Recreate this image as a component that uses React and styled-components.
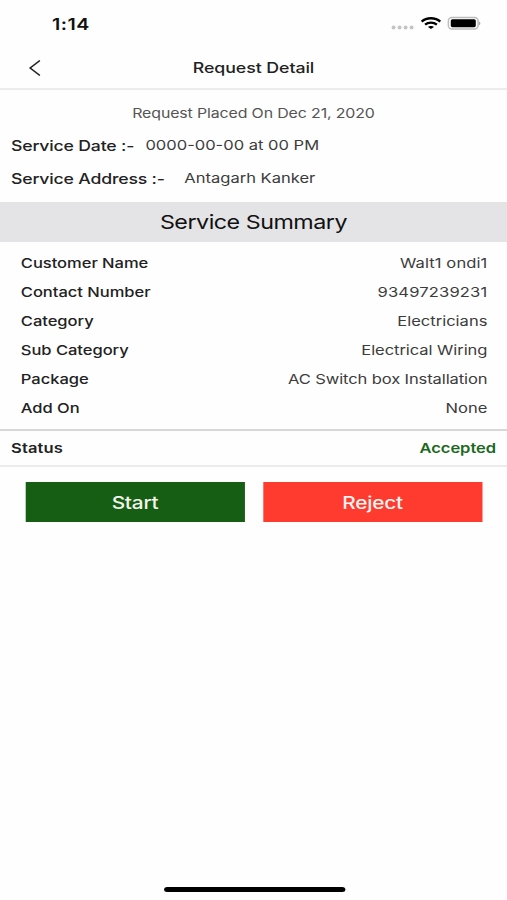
import React from 'react';
import styled, { createGlobalStyle } from 'styled-components';

const details = [
    { label: 'Customer Name', value: 'Walt1 ondi1', spacing: 0.08 },
    { label: 'Contact Number', value: '93497239231', spacing: 0.14 },
    { label: 'Category', value: 'Electricians', spacing: 0 },
    { label: 'Sub Category', value: 'Electrical Wiring', spacing: -0.05 },
    { label: 'Package', value: 'AC Switch box Installation', spacing: -0.09 },
    { label: 'Add On', value: 'None', spacing: 0 },
];

function StatusIcons() {
    return (
        <Icons width="74" height="16" viewBox="0 0 90.6 16" preserveAspectRatio="none">
            <g fill="#c4c4c4">
                <circle cx="2.9" cy="11.4" r="2" />
                <circle cx="8.9" cy="11.4" r="2" />
                <circle cx="14.9" cy="11.4" r="2" />
                <circle cx="20.9" cy="11.4" r="2" />
            </g>
            <g fill="none" stroke="#000" strokeWidth="2.3">
                <path d="M31 5.6C35.8 1.1 44.7 1.1 49.6 5.6" />
                <path d="M34.4 8.7C37.6 5.9 42.9 5.9 46.2 8.7" />
            </g>
            <path d="M37.4 11C38.7 9.7 41.9 9.7 43.2 11L40.3 13Z" fill="#000" />
            <rect x="57.7" y="1.5" width="29.7" height="11.4" rx="3.4" fill="#fff" stroke="#bdbdbd" strokeWidth="1.5" />
            <rect x="60.1" y="3.2" width="25" height="8" rx="1.6" fill="#000" />
            <path d="M88.6 5.4C90 5.8 90 8.8 88.6 9.2Z" fill="#888" />
        </Icons>
    );
}

function App() {
    return (
        <>
            <GlobalStyle />
            <Screen>
                <StatusBar>
                    <Time>1:14</Time>
                    <StatusIcons />
                </StatusBar>
                <Header>
                    <Back aria-label="Back">
                        <svg width="10" height="18" viewBox="0 0 10 18" fill="none" stroke="#222" strokeWidth="1.35">
                            <path d="M9.6 1.6L1.6 9L9.6 16.4" />
                        </svg>
                    </Back>
                    <Title>Request Detail</Title>
                </Header>
                <Placed>Request Placed On Dec 21, 2020</Placed>
                <Info>
                    <InfoLabel>Service Date :-</InfoLabel>
                    <InfoValue $gap={9.2}>0000-00-00 at 00 PM</InfoValue>
                </Info>
                <Info>
                    <InfoLabel>Service Address :-</InfoLabel>
                    <InfoValue $gap={16}>Antagarh Kanker</InfoValue>
                </Info>
                <Summary>Service Summary</Summary>
                <List>
                    {
                        details.map((item) => (
                            <Row key={item.label}>
                                <Label>{item.label}</Label>
                                <Value $spacing={item.spacing}>{item.value}</Value>
                            </Row>
                        ))
                    }
                </List>
                <Status>
                    <StatusLabel>Status</StatusLabel>
                    <StatusValue>Accepted</StatusValue>
                </Status>
                <Actions>
                    <Button $color="#155e13">Start</Button>
                    <Button $color="#ff3b30">Reject</Button>
                </Actions>
                <HomeBar />
            </Screen>
        </>
    );
}

const GlobalStyle = createGlobalStyle`
  * {
    box-sizing: border-box;
  }
  body {
    margin: 0;
    background: #fefefe;
    overflow: hidden;
  }
`;
/* 414pt wide screen, stretched to fill the 507px window */
const Screen = styled.div`
  display: flex;
  flex-direction: column;
  width: 414px;
  height: 900px;
  transform: scaleX(1.22464);
  transform-origin: 0 0;
  background: #fefefe;
  color: #222;
  font-family: Inter, "Liberation Sans", sans-serif;
  font-size: 13.5px;
  white-space: nowrap;
`;
const StatusBar = styled.div`
  display: flex;
  align-items: center;
  justify-content: space-between;
  height: 46px;
  padding: 1px 21px 0 42.5px;
`;
const Time = styled.div`
  font-size: 16px;
  font-weight: 600;
  letter-spacing: 0.35px;
  color: #111;
`;
const Icons = styled.svg`
  display: block;
`;
const Header = styled.div`
  display: grid;
  grid-template-columns: 60px 1fr 60px;
  align-items: center;
  height: 44px;
  padding-top: 1px;
  border-bottom: 2px solid #ececec;
`;
const Back = styled.button`
  display: flex;
  margin-left: 23px;
  padding: 0;
  border: 0;
  background: none;
`;
const Title = styled.div`
  text-align: center;
  font-size: 14.5px;
  font-weight: 500;
  letter-spacing: -0.06px;
`;
const Placed = styled.div`
  height: 39px;
  padding-top: 2px;
  line-height: 43px;
  text-align: center;
  font-size: 13px;
  letter-spacing: -0.11px;
  color: #555;
`;
const Info = styled.div`
  display: flex;
  align-items: center;
  height: 33px;
  padding-left: 9px;
`;
const InfoLabel = styled.div`
  font-size: 14.4px;
  font-weight: 500;
  letter-spacing: -0.14px;
`;
const InfoValue = styled.div`
  margin-left: ${(props) => props.$gap}px;
  padding-bottom: 1px;
  font-size: 13.5px;
  color: #3c3c3c;
`;
const Summary = styled.div`
  height: 40px;
  margin-top: 7px;
  line-height: 41px;
  background: #e4e4e6;
  text-align: center;
  font-size: 19px;
  letter-spacing: -0.4px;
  color: #111;
`;
const List = styled.div`
  padding: 6px 16px 6px 17px;
`;
const Row = styled.div`
  display: flex;
  align-items: center;
  justify-content: space-between;
  height: 29.1px;
`;
const Label = styled.div`
  font-weight: 500;
  letter-spacing: -0.03px;
`;
const Value = styled.div`
  letter-spacing: ${(props) => props.$spacing}px;
  color: #3c3c3c;
`;
const Status = styled.div`
  display: flex;
  align-items: center;
  justify-content: space-between;
  height: 38.4px;
  padding: 0 9px;
  border-top: 2px solid #d8d8d8;
  border-bottom: 2px solid #ececec;
  font-weight: 600;
`;
const StatusLabel = styled.div`
  letter-spacing: 0.1px;
`;
const StatusValue = styled.div`
  letter-spacing: -0.05px;
  color: #1c691d;
`;
const Actions = styled.div`
  display: flex;
  justify-content: space-between;
  padding: 15.4px 20px 0 20.5px;
`;
const Button = styled.button`
  width: 179.5px;
  height: 40px;
  padding: 2px 0 0;
  border: 0;
  background: ${(props) => props.$color};
  color: #f4f4ee;
  font-family: inherit;
  font-size: 17px;
  font-weight: 500;
  letter-spacing: -0.2px;
`;
const HomeBar = styled.div`
  width: 148px;
  height: 5px;
  margin: auto auto 8px 133.5px;
  border-radius: 3px;
  background: #000;
`;

export default App;
